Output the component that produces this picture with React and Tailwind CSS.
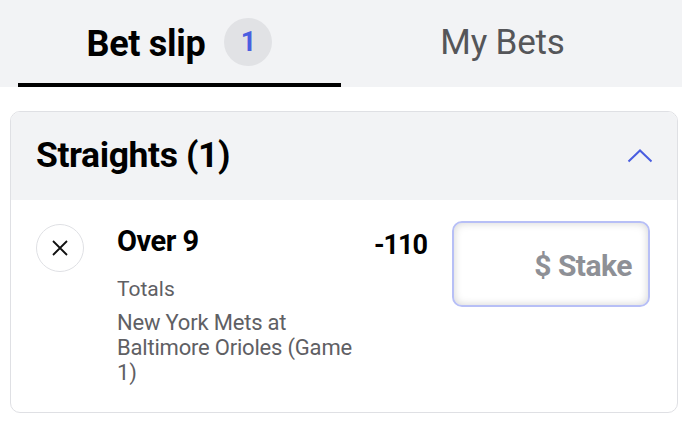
import React from "react";

export default function App() {
  return (
    <div className="w-[682px] h-[428px] bg-white overflow-hidden" style={{ fontFamily: "Roboto, 'Liberation Sans', sans-serif" }}>
      <div className="h-[87px] bg-[#f2f3f5] px-[18px] flex">
        <div className="flex-1 relative flex items-center justify-center gap-[19px]">
          <span className="text-[36px] font-bold text-black tracking-[-0.3px]">Bet slip</span>
          <span className="w-[48px] h-[48px] -mt-[3px] rounded-full bg-[#e1e2e5] flex items-center justify-center text-[27px] font-bold text-[#4a5ee0]">1</span>
          <div className="absolute left-0 right-0 bottom-0 h-[4px] bg-black"></div>
        </div>
        <div className="flex-1 flex items-center justify-center">
          <span className="text-[35px] text-[#555659] tracking-[-0.2px]">My Bets</span>
        </div>
      </div>
      <div className="mt-[24px] ml-[10px] w-[668px] border-[1.5px] border-[#dfe0e4] rounded-[10px] overflow-hidden">
        <div className="h-[88px] bg-[#f2f3f5] flex items-center justify-between pl-[25px] pr-[24px]">
          <span className="text-[35.5px] font-bold text-black tracking-[-0.4px]">Straights (1)</span>
          <svg width="26" height="14" viewBox="0 0 26 14" fill="none">
            <path d="M1.5 12.5 L13 1.5 L24.5 12.5" stroke="#4a5ee0" strokeWidth="2" />
          </svg>
        </div>
        <div className="flex pl-[25px] pr-[25px] pt-[21px] pb-[27px]">
          <div className="w-[48px] h-[48px] mt-[3px] rounded-full border-[1.5px] border-[#dfe0e4] flex items-center justify-center shrink-0">
            <svg width="18" height="18" viewBox="0 0 18 18" fill="none">
              <path d="M2 2 L16 16 M16 2 L2 16" stroke="#111" strokeWidth="1.8" />
            </svg>
          </div>
          <div className="ml-[33px] w-[250px] pt-[2px]">
            <div className="text-[29px] font-bold text-black leading-[36px] tracking-[-0.5px]">Over 9</div>
            <div className="mt-[17px] text-[21px] text-[#5f6064] leading-[26px]">Totals</div>
            <div className="mt-[8px] text-[22px] text-[#5f6064] leading-[25px] w-[246px] tracking-[-0.2px]">New York Mets at Baltimore Orioles (Game 1)</div>
          </div>
          <div className="w-[60px] text-right pt-[6px] text-[27px] font-bold text-black leading-[36px] tracking-[-1px]">-110</div>
          <div className="ml-[25px] w-[198px] h-[86px] rounded-[10px] border-2 border-[#b7bff6] shadow-[inset_0_0_8px_rgba(0,0,0,0.18)] flex items-center justify-end pr-[16px] pt-[2px]">
            <span className="text-[30px] font-bold text-[#8e9096] tracking-[-0.5px]">$ Stake</span>
          </div>
        </div>
      </div>
    </div>
  );
}
